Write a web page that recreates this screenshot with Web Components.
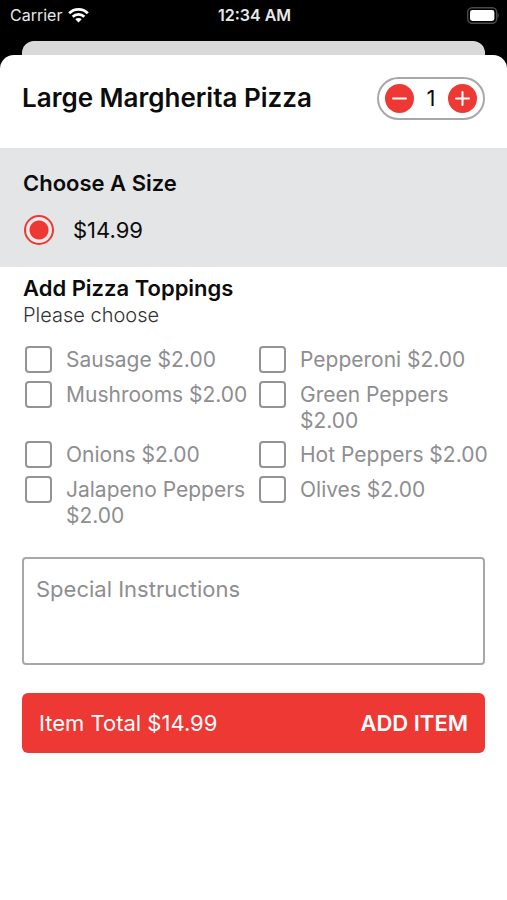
<!DOCTYPE html>
<html lang="en">
<head>
<meta charset="utf-8">
<meta name="viewport" content="width=device-width, initial-scale=1">
<title>Large Margherita Pizza</title>
<style>
  body {
    margin: 0;
    background: #fff;
    color: #0c0c0c;
    font-family: Inter, "Liberation Sans", sans-serif;
  }
</style>
</head>
<body>
<item-page></item-page>

<script>
class StatusBar extends HTMLElement {
  constructor() {
    super();
    this.attachShadow({ mode: "open" });
  }

  connectedCallback() {
    this.shadowRoot.innerHTML = `
      <style>
        :host {
          display: grid;
          grid-template-columns: 1fr auto 1fr;
          align-items: center;
          height: 30px;
          padding: 0 8px 0 10px;
          color: #e8e8e8;
          font-size: 16px;
          line-height: 20px;
        }
        .carrier {
          display: flex;
          align-items: center;
          gap: 6px;
        }
        .time {
          font-weight: 600;
        }
        .battery {
          justify-self: end;
        }
        svg {
          display: block;
        }
      </style>
      <div class="carrier">
        <span>Carrier</span>
        <svg width="21" height="16" viewBox="0 0 21 16" fill="none" stroke="#fff" stroke-width="2.8" aria-hidden="true">
          <path d="M1.2 6.2a13.2 13.2 0 0 1 18.6 0"/>
          <path d="M4.7 9.7a8.3 8.3 0 0 1 11.6 0"/>
          <path d="M10.5 15.5 7.3 12.3a4.6 4.6 0 0 1 6.4 0z" fill="#fff" stroke="none"/>
        </svg>
      </div>
      <span class="time">12:34 AM</span>
      <svg class="battery" width="33" height="17" viewBox="0 0 33 17" aria-hidden="true">
        <rect x="1.700" y=".7" width="29" height="15.600" rx="4.500" fill="none" stroke="#4a4a4a" stroke-width="1.400"/>
        <rect x="4" y="3" width="24.400" height="11" rx="2.400" fill="#fff"/>
        <path d="M31.600 6v5c.8-.4 1.200-1.400 1.200-2.500s-.4-2.100-1.200-2.500z" fill="#4a4a4a"/>
      </svg>
    `;
  }
}

class QuantityStepper extends HTMLElement {
  constructor() {
    super();
    this.attachShadow({ mode: "open" });
    this.count = 1;
  }

  connectedCallback() {
    this.shadowRoot.innerHTML = `
      <style>
        :host {
          display: flex;
          align-items: center;
          justify-content: space-between;
          box-sizing: border-box;
          width: 108px;
          height: 43px;
          padding: 0 6px;
          border: 2px solid #a8a8aa;
          border-radius: 22px;
        }
        button {
          display: block;
          width: 29px;
          height: 29px;
          margin: 0;
          padding: 0;
          border: 0;
          border-radius: 50%;
          background: #ed3833;
          cursor: pointer;
        }
        svg {
          display: block;
        }
        output {
          font-size: 22px;
          line-height: 26px;
        }
      </style>
      <button type="button" data-step="-1" aria-label="Remove one">
        <svg width="29" height="29" viewBox="0 0 29 29" stroke="#fff" stroke-width="2" stroke-linecap="round"><path d="M8 14.5h13"/></svg>
      </button>
      <output>${this.count}</output>
      <button type="button" data-step="1" aria-label="Add one">
        <svg width="29" height="29" viewBox="0 0 29 29" stroke="#fff" stroke-width="2" stroke-linecap="round"><path d="M8 14.5h13M14.5 8v13"/></svg>
      </button>
    `;
    this.shadowRoot.querySelectorAll("button").forEach((button) => {
      button.addEventListener("click", () => {
        this.count = Math.max(1, this.count + Number(button.dataset.step));
        this.shadowRoot.querySelector("output").textContent = this.count;
      });
    });
  }
}

class SizeOption extends HTMLElement {
  constructor() {
    super();
    this.attachShadow({ mode: "open" });
  }

  connectedCallback() {
    this.shadowRoot.innerHTML = `
      <style>
        :host {
          display: block;
        }
        label {
          display: flex;
          align-items: center;
          gap: 19px;
          font-size: 22px;
          line-height: 30px;
        }
        input {
          appearance: none;
          box-sizing: border-box;
          flex: none;
          width: 30px;
          height: 30px;
          margin: 0;
          border: 2px solid #ed3833;
          border-radius: 50%;
          background: #f6e9e9;
        }
        input:checked {
          background: radial-gradient(circle, #ed3833 9px, #f6e9e9 10px);
        }
      </style>
      <label><input type="radio" name="size" checked><span><slot></slot></span></label>
    `;
  }
}

class ToppingOption extends HTMLElement {
  constructor() {
    super();
    this.attachShadow({ mode: "open" });
  }

  connectedCallback() {
    this.shadowRoot.innerHTML = `
      <style>
        :host {
          display: block;
          color: #8e8e90;
        }
        label {
          display: flex;
          align-items: flex-start;
          gap: 14px;
          font-size: 21px;
          line-height: 26px;
        }
        span {
          margin: 1px 0 -1px;
        }
        input {
          appearance: none;
          box-sizing: border-box;
          flex: none;
          width: 27px;
          height: 27px;
          margin: 0;
          border: 2px solid #949496;
          border-radius: 4px;
          background: #fff;
        }
        input:checked {
          border-color: #ed3833;
          background: #ed3833;
        }
      </style>
      <label><input type="checkbox"><span><slot></slot></span></label>
    `;
  }
}

class ItemPage extends HTMLElement {
  constructor() {
    super();
    this.attachShadow({ mode: "open" });
    this.toppings = [
      "Sausage", "Pepperoni",
      "Mushrooms", "Green Peppers",
      "Onions", "Hot Peppers",
      "Jalapeno Peppers", "Olives",
    ];
  }

  connectedCallback() {
    this.shadowRoot.innerHTML = `
      <style>
        :host {
          display: block;
        }
        .backdrop {
          background: #000;
        }
        .card-behind {
          height: 14px;
          margin: 11px 22px 0;
          border-radius: 12px 12px 0 0;
          background: #d9d9d9;
        }
        header {
          display: flex;
          align-items: center;
          justify-content: space-between;
          box-sizing: border-box;
          height: 93px;
          padding: 0 22px 7px;
          border-radius: 14px 14px 0 0;
          background: #fff;
        }
        h1, h2, p {
          margin: 0;
        }
        h1 {
          font-size: 26px;
          font-weight: 600;
          line-height: 32px;
        }
        h2 {
          font-size: 22px;
          font-weight: 600;
          line-height: 28px;
        }
        .size {
          display: grid;
          gap: 18px;
          padding: 21px 24px 22px;
          background: #e3e5e6;
        }
        .size h2 {
          margin-left: -1px;
        }
        .toppings {
          padding: 7px 14px 0 23px;
        }
        .toppings p {
          color: #333;
          font-size: 20px;
          font-weight: 300;
          line-height: 26px;
        }
        .options {
          display: grid;
          grid-template-columns: 1fr 1fr;
          gap: 8px 0;
          margin: 18px 0 0 2px;
        }
        form {
          display: grid;
          gap: 28px;
          padding: 29px 22px;
        }
        textarea {
          display: block;
          box-sizing: border-box;
          width: 100%;
          height: 108px;
          margin: 0;
          padding: 17px 12px;
          border: 2px solid #a8a8aa;
          border-radius: 4px;
          background: #fff;
          color: inherit;
          font: 22px/26px Inter, "Liberation Sans", sans-serif;
          resize: none;
        }
        textarea::placeholder {
          color: #8e8e90;
        }
        button {
          display: flex;
          align-items: center;
          justify-content: space-between;
          height: 60px;
          margin: 0;
          padding: 0 17px;
          border: 0;
          border-radius: 6px;
          background: #ed3833;
          color: #fff;
          font: 22px/26px Inter, "Liberation Sans", sans-serif;
          cursor: pointer;
        }
        b {
          font-weight: 600;
        }
      </style>
      <div class="backdrop">
        <status-bar></status-bar>
        <div class="card-behind"></div>
        <header>
          <h1>Large Margherita Pizza</h1>
          <quantity-stepper></quantity-stepper>
        </header>
      </div>
      <section class="size">
        <h2>Choose A Size</h2>
        <size-option>$14.99</size-option>
      </section>
      <section class="toppings">
        <h2>Add Pizza Toppings</h2>
        <p>Please choose</p>
        <div class="options">
          ${this.toppings
            .map((name) => `<topping-option>${name} $2.00</topping-option>`)
            .join("")}
        </div>
      </section>
      <form>
        <textarea aria-label="Special Instructions" placeholder="Special Instructions"></textarea>
        <button type="button"><span>Item Total $14.99</span><b>ADD ITEM</b></button>
      </form>
    `;
  }
}

customElements.define("status-bar", StatusBar);
customElements.define("quantity-stepper", QuantityStepper);
customElements.define("size-option", SizeOption);
customElements.define("topping-option", ToppingOption);
customElements.define("item-page", ItemPage);
</script>
</body>
</html>
